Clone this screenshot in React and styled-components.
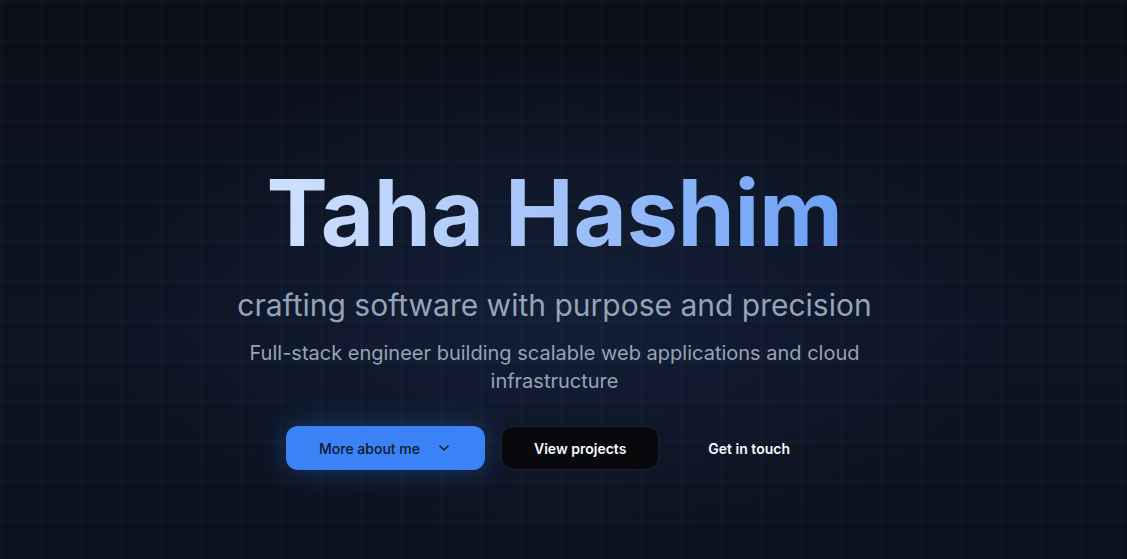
import React from 'react';
import styled, { createGlobalStyle } from 'styled-components';

const GlobalStyle = createGlobalStyle`
	html, body {
		margin: 0;
		padding: 0;
		background: #0b0f19;
	}
	body {
		font-family: Inter, "Noto Sans", sans-serif;
		-webkit-font-smoothing: antialiased;
	}
	* {
		box-sizing: border-box;
	}
`;

const Hero = styled.section`
	position: relative;
	min-height: 559px;
	overflow: hidden;
	display: flex;
	flex-direction: column;
	align-items: center;
	padding: 162px 18px 0 0;
	background:
		radial-gradient(ellipse 55% 60% at 50% 55%, rgba(22, 34, 60, 0.75), rgba(11, 15, 25, 0) 75%),
		linear-gradient(180deg, #0b0f19 0%, #0d1424 60%, #0b111d 100%);

	&::before {
		content: '';
		position: absolute;
		inset: 0;
		pointer-events: none;
		background-image:
			linear-gradient(to right, rgba(148, 163, 184, 0.06) 1px, transparent 1px),
			linear-gradient(to bottom, rgba(148, 163, 184, 0.06) 1px, transparent 1px);
		background-size: 40px 40px;
		background-position: 1px 1px;
	}
`;

const Content = styled.div`
	position: relative;
	display: flex;
	flex-direction: column;
	align-items: center;
	text-align: center;
`;

const Title = styled.h1`
	margin: 0;
	font-size: 92px;
	font-weight: 700;
	line-height: 1.1;
	letter-spacing: -0.4px;
	background: linear-gradient(90deg, #d0e1fd 0%, #a8c6fa 45%, #6aa0f6 100%);
	-webkit-background-clip: text;
	background-clip: text;
	color: transparent;
`;

const Tagline = styled.p`
	margin: 24px 0 0;
	font-size: 30px;
	font-weight: 400;
	line-height: 36px;
	color: #94a3b8;
`;

const Summary = styled.p`
	margin: 16px 0 0;
	max-width: 640px;
	font-size: 20px;
	line-height: 28px;
	color: #94a3b8;
`;

const Actions = styled.div`
	display: flex;
	align-items: center;
	gap: 16px;
	margin-top: 31px;
`;

const Button = styled.button`
	display: inline-flex;
	align-items: center;
	justify-content: center;
	gap: 16px;
	height: 44px;
	padding: 0 32px;
	border-radius: 12px;
	font-family: inherit;
	font-size: 14px;
	cursor: pointer;
	border: 1px solid transparent;

	${({ $variant }) => $variant === 'primary' && `
		background: #3b82f6;
		color: #0f172a;
		font-weight: 500;
		box-shadow: 0 0 30px rgba(59, 130, 246, 0.32);
	`}

	${({ $variant }) => $variant === 'dark' && `
		background: #08090c;
		border-color: #1c2230;
		color: #f8fafc;
		font-weight: 600;
	`}

	${({ $variant }) => $variant === 'ghost' && `
		background: transparent;
		color: #f8fafc;
		font-weight: 600;
	`}
`;

const Chevron = () => (
	<svg width="16" height="16" viewBox="0 0 24 24" fill="none" stroke="currentColor" strokeWidth="2.2" strokeLinecap="round" strokeLinejoin="round">
		<path d="M6 9l6 6 6-6" />
	</svg>
);

export default function App() {
	return (
		<>
			<GlobalStyle />
			<Hero>
				<Content>
					<Title>Taha Hashim</Title>
					<Tagline>crafting software with purpose and precision</Tagline>
					<Summary>
						Full-stack engineer building scalable web applications and cloud infrastructure
					</Summary>
					<Actions>
						<Button $variant="primary">
							More about me
							<Chevron />
						</Button>
						<Button $variant="dark">View projects</Button>
						<Button $variant="ghost">Get in touch</Button>
					</Actions>
				</Content>
			</Hero>
		</>
	);
}
